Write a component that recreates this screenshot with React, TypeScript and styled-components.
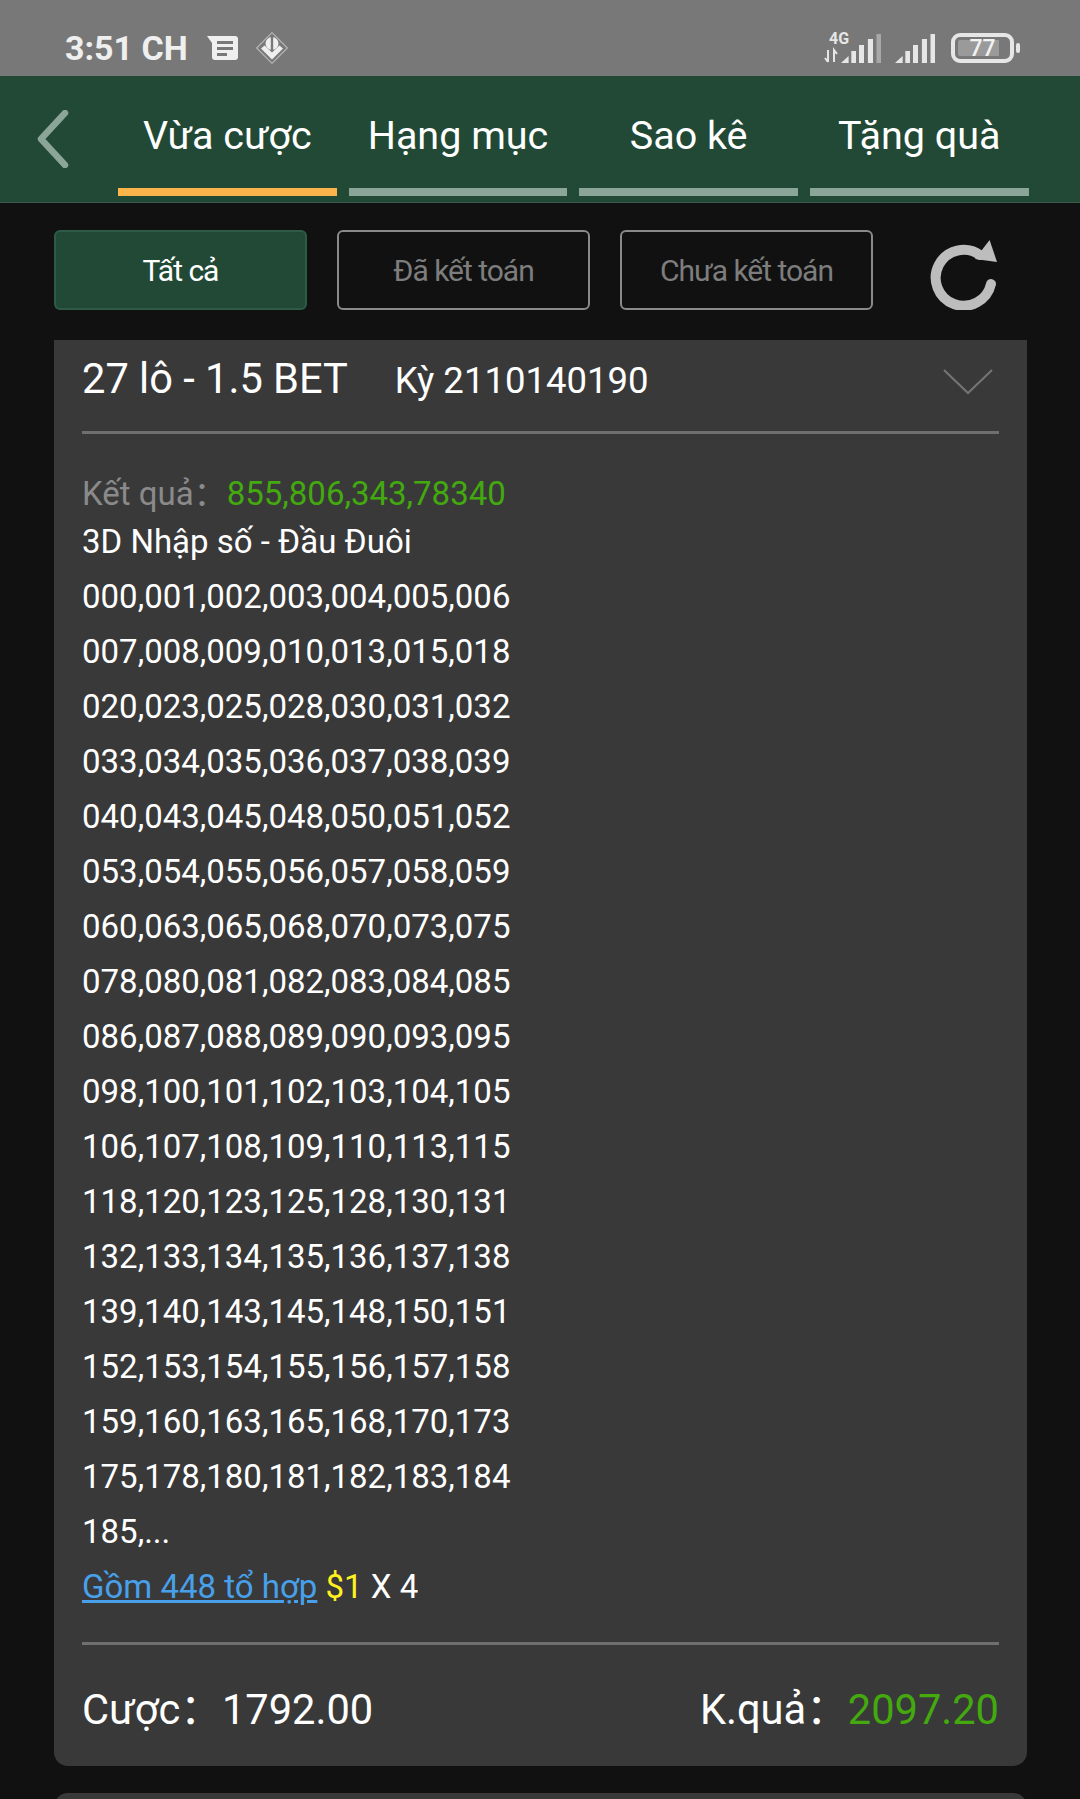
import styled, { createGlobalStyle } from "styled-components";

const GlobalStyle = createGlobalStyle`
  html, body {
    margin: 0;
    padding: 0;
    background: #111111;
  }
  body {
    font-family: Roboto, "Noto Sans CJK SC", sans-serif;
    color: #ffffff;
  }
`;

const Page = styled.div`
  width: 1080px;
  height: 1799px;
  overflow: hidden;
  display: flex;
  flex-direction: column;
`;

const StatusBar = styled.div`
  height: 76px;
  flex-shrink: 0;
  box-sizing: border-box;
  background: #787878;
  display: flex;
  align-items: center;
  justify-content: space-between;
  padding: 20px 60px 0 65px;
`;

const StatusGroup = styled.div`
  display: flex;
  align-items: center;
`;

const Clock = styled.span`
  font-size: 34px;
  font-weight: 700;
  color: #efefef;
  margin-right: 19px;
`;

const MessageSvg = styled.svg`
  margin-right: 18px;
`;

const NetworkSvg = styled.svg`
  margin-right: -7px;
  overflow: visible;
`;

const SignalSvg = styled.svg<{ $gap?: boolean }>`
  margin-left: ${({ $gap }) => ($gap ? "14px" : "0")};
`;

const Header = styled.div`
  height: 127px;
  flex-shrink: 0;
  box-sizing: border-box;
  background: #224936;
  border-bottom: 1px solid #3a5a4c;
  display: flex;
  padding-left: 37px;
`;

const BackButton = styled.div`
  width: 81px;
  flex-shrink: 0;
  padding-top: 34px;
`;

const Tabs = styled.div`
  display: flex;
  gap: 12px;
`;

const Tab = styled.div<{ $active?: boolean }>`
  width: 218.67px;
  height: 120px;
  box-sizing: border-box;
  display: flex;
  align-items: center;
  justify-content: center;
  padding-top: 6px;
  font-size: 39.5px;
  color: #ffffff;
  border-bottom: 8px solid ${({ $active }) => ($active ? "#fdb44a" : "#8ba598")};
`;

const Filters = styled.div`
  height: 137px;
  flex-shrink: 0;
  box-sizing: border-box;
  display: flex;
  align-items: flex-start;
  padding: 27px 0 0 54px;
  gap: 30px;
`;

const FilterButton = styled.div<{ $active?: boolean }>`
  width: 253px;
  height: 80px;
  box-sizing: border-box;
  display: flex;
  align-items: center;
  justify-content: center;
  border-radius: 6px;
  font-size: 30px;
  letter-spacing: -1px;
  border: 2px solid ${({ $active }) => ($active ? "#2d5b47" : "#8a8a8a")};
  background: ${({ $active }) => ($active ? "#224936" : "transparent")};
  color: ${({ $active }) => ($active ? "#ffffff" : "#7d7d7d")};
`;

const RefreshButton = styled.div`
  margin: 10px 0 0 27px;
  display: flex;
`;

const Card = styled.div`
  width: 973px;
  margin-left: 54px;
  flex-shrink: 0;
  box-sizing: border-box;
  background: #393939;
  border-radius: 0 0 14px 14px;
  padding: 0 28px 0 28px;
`;

const NextCard = styled(Card)`
  margin-top: 27px;
  height: 40px;
  border-radius: 14px 14px 0 0;
`;

const CardHead = styled.div`
  height: 94px;
  box-sizing: border-box;
  display: flex;
  align-items: center;
  justify-content: space-between;
  padding-bottom: 15px;
  border-bottom: 3px solid #6f6f6f;
`;

const HeadLeft = styled.div`
  display: flex;
  align-items: baseline;
`;

const LotTitle = styled.span`
  font-size: 41.6px;
  margin-right: 47px;
`;

const Period = styled.span`
  font-size: 36.5px;
`;

const Chevron = styled.div`
  display: flex;
  margin: 7px 6px 0 0;
`;

const Details = styled.div`
  padding: 39px 0 28px;
  border-bottom: 3px solid #6f6f6f;
  font-size: 33px;
  line-height: 55px;
`;

const ResultLine = styled.div`
  line-height: 41px;
  height: 41px;
  color: #8a8a8a;
`;

const Green = styled.span`
  color: #43a90f;
`;

const NumberLine = styled.div`
  height: 55px;
`;

const ComboLink = styled.span`
  color: #48a0ea;
  text-decoration: underline;
`;

const Stake = styled.span`
  color: #fff11f;
`;

const CardFoot = styled.div`
  height: 121px;
  box-sizing: border-box;
  display: flex;
  align-items: center;
  justify-content: space-between;
  font-size: 41.6px;
`;

const BatteryBox = styled.div`
  width: 63px;
  height: 30px;
  box-sizing: border-box;
  border: 4px solid #e6e6e6;
  border-radius: 9px;
  margin-left: 16px;
  padding: 3px;
  display: flex;
  align-items: center;
  justify-content: center;
  font-size: 23px;
  font-weight: 500;
  color: #f2f2f2;
  background: linear-gradient(to right, #9a9a9a 0 80%, transparent 80%);
  background-clip: content-box;
`;

const BatteryTip = styled.div`
  width: 4px;
  height: 10px;
  margin-left: 2px;
  border-radius: 2px;
  background: #e6e6e6;
`;

const numberLines = [
  "3D Nhập số - Đầu Đuôi",
  "000,001,002,003,004,005,006",
  "007,008,009,010,013,015,018",
  "020,023,025,028,030,031,032",
  "033,034,035,036,037,038,039",
  "040,043,045,048,050,051,052",
  "053,054,055,056,057,058,059",
  "060,063,065,068,070,073,075",
  "078,080,081,082,083,084,085",
  "086,087,088,089,090,093,095",
  "098,100,101,102,103,104,105",
  "106,107,108,109,110,113,115",
  "118,120,123,125,128,130,131",
  "132,133,134,135,136,137,138",
  "139,140,143,145,148,150,151",
  "152,153,154,155,156,157,158",
  "159,160,163,165,168,170,173",
  "175,178,180,181,182,183,184",
  "185,...",
];

const tabs = ["Vừa cược", "Hạng mục", "Sao kê", "Tặng quà"];

const MessageIcon = () => (
  <MessageSvg width="31" height="24" viewBox="0 0 31 24">
    <path d="M0 0h28a3 3 0 0 1 3 3v18a3 3 0 0 1-3 3H8a3 3 0 0 1-3-3V7z" fill="#efefef" />
    <path d="M10 5h16v3H10zM10 11h16v3H10zM10 17h10v3H10z" fill="#787878" />
  </MessageSvg>
);

const VpnIcon = () => (
  <svg width="32" height="32" viewBox="0 0 32 32">
    <path d="M16 .7L31.3 16 16 31.3.7 16z" fill="none" stroke="#b4b4b4" strokeWidth="1.2" />
    <circle cx="16" cy="11.5" r="6.5" fill="#efefef" />
    <path d="M14.8 5h2.4v13h-2.4z" fill="#787878" />
    <path d="M5 16.5l3.5-3 7.5 7 7.5-7 3.5 3-11 11z" fill="#efefef" />
  </svg>
);

const SignalIcon = ({ dimLast, gap }: { dimLast?: boolean; gap?: boolean }) => (
  <SignalSvg $gap={gap} width="40" height="29" viewBox="0 0 40 29">
    <path d="M0 29l7.6-7v7z" fill="#e6e6e6" />
    <path d="M10.3 17H15v12h-4.7z" fill="#e6e6e6" />
    <path d="M18 11h5v18h-5z" fill="#e6e6e6" />
    <path d="M26.900 5H32v24h-5.100z" fill="#e6e6e6" />
    <path d="M35.500 0H40v29h-4.500z" fill={dimLast ? "#a8a8a8" : "#e6e6e6"} />
  </SignalSvg>
);

const NetworkIcon = () => (
  <NetworkSvg width="24" height="30" viewBox="0 0 24 30">
    <text x="5" y="11" fontSize="16" fontWeight="700" fontFamily="Roboto" fill="#e6e6e6">
      4G
    </text>
    <path d="M4 17v12M1 25l3 4M10 29V17l3 4" fill="none" stroke="#e6e6e6" strokeWidth="2" />
  </NetworkSvg>
);

const BackIcon = () => (
  <svg width="32" height="58" viewBox="0 0 32 58">
    <path d="M28 3L4 29l24 26" fill="none" stroke="#8ba598" strokeWidth="6.5" strokeLinecap="round" strokeLinejoin="round" />
  </svg>
);

const RefreshIcon = () => (
  <svg width="68" height="70" viewBox="0 0 68 70">
    <path d="M61 44A28 28 0 1 1 50 15" fill="none" stroke="#bdbdbd" strokeWidth="10" strokeLinecap="round" />
    <path d="M59.600 0L67 22l-22-3z" fill="#bdbdbd" />
  </svg>
);

const ChevronIcon = () => (
  <svg width="50" height="26" viewBox="0 0 50 26">
    <path d="M1 1l24 23L49 1" fill="none" stroke="#757575" strokeWidth="2" />
  </svg>
);

export default function App() {
  return (
    <>
      <GlobalStyle />
      <Page>
        <StatusBar>
          <StatusGroup>
            <Clock>3:51 CH</Clock>
            <MessageIcon />
            <VpnIcon />
          </StatusGroup>
          <StatusGroup>
            <NetworkIcon />
            <SignalIcon dimLast />
            <SignalIcon gap />
            <BatteryBox>77</BatteryBox>
            <BatteryTip />
          </StatusGroup>
        </StatusBar>

        <Header>
          <BackButton>
            <BackIcon />
          </BackButton>
          <Tabs>
            {tabs.map((tab, i) => (
              <Tab key={tab} $active={i === 0}>
                {tab}
              </Tab>
            ))}
          </Tabs>
        </Header>

        <Filters>
          <FilterButton $active>Tất cả</FilterButton>
          <FilterButton>Đã kết toán</FilterButton>
          <FilterButton>Chưa kết toán</FilterButton>
          <RefreshButton>
            <RefreshIcon />
          </RefreshButton>
        </Filters>

        <Card>
          <CardHead>
            <HeadLeft>
              <LotTitle>27 lô - 1.5 BET</LotTitle>
              <Period>Kỳ 2110140190</Period>
            </HeadLeft>
            <Chevron>
              <ChevronIcon />
            </Chevron>
          </CardHead>

          <Details>
            <ResultLine>
              Kết quả：<Green>855,806,343,78340</Green>
            </ResultLine>
            {numberLines.map((line) => (
              <NumberLine key={line}>{line}</NumberLine>
            ))}
            <NumberLine>
              <ComboLink>Gồm 448 tổ hợp</ComboLink> <Stake>$1</Stake> X 4
            </NumberLine>
          </Details>

          <CardFoot>
            <span>Cược：1792.00</span>
            <span>
              K.quả：<Green>2097.20</Green>
            </span>
          </CardFoot>
        </Card>
        <NextCard />
      </Page>
    </>
  );
}
